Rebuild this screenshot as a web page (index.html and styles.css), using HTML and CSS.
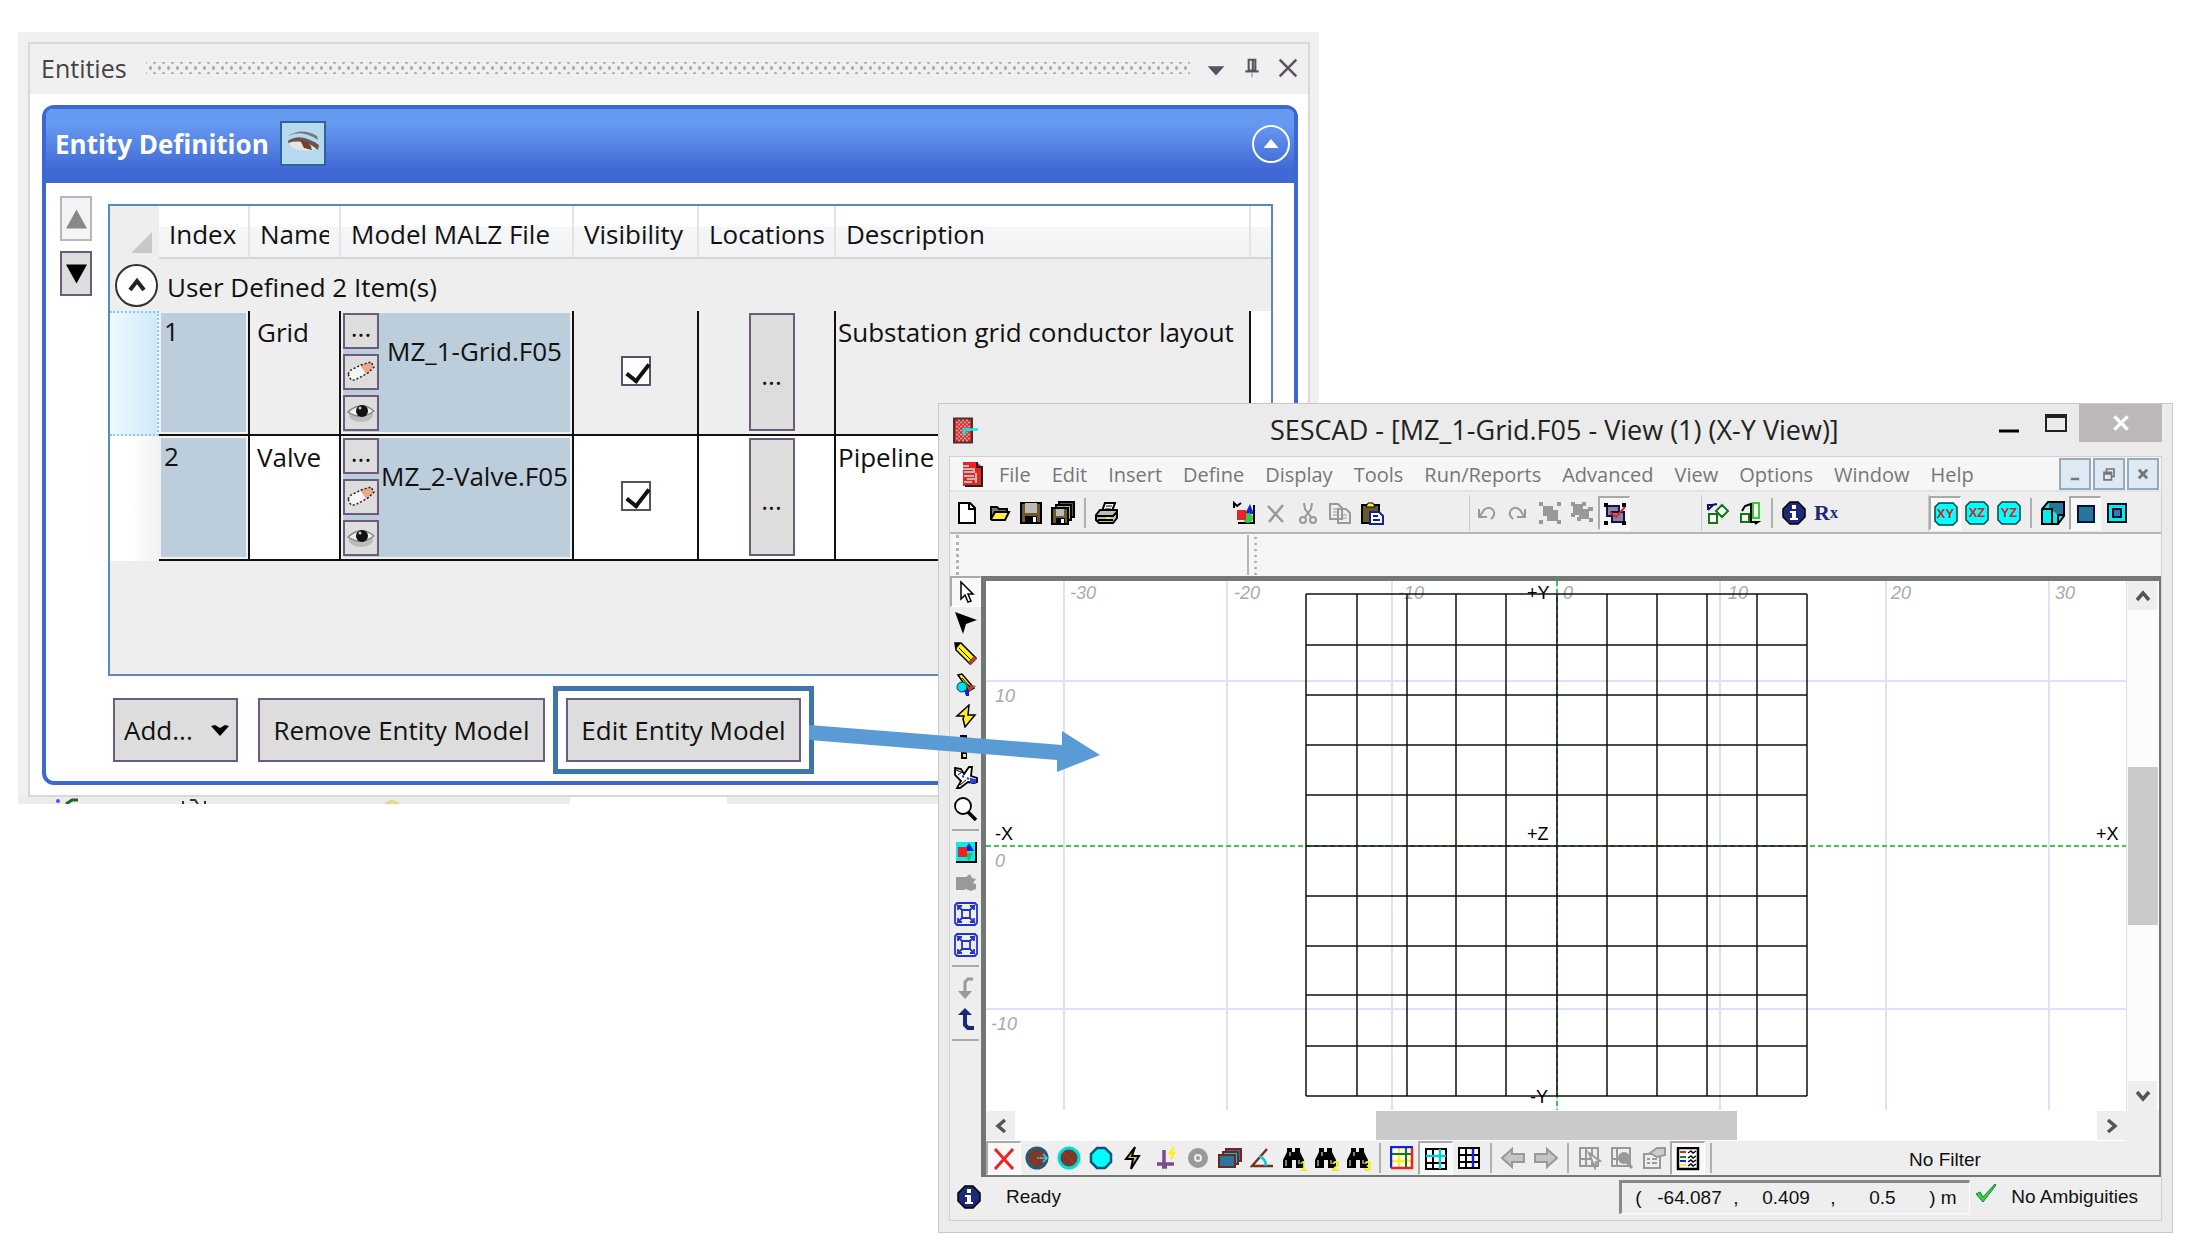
FILE: index.html
```
<!DOCTYPE html>
<html lang="en">
<head>
    <meta charset="UTF-8">
    <title>Edit Entity Model</title>
    <link rel="stylesheet" href="styles.css">
</head>
<body>

<!-- shared icons -->
<svg class="sprite">
    <symbol id="i-eraser" viewBox="0 0 28 24">
        <path d="M1 14L4 10 14 5 24 2l3 5-6 6-13 7H4z" fill="#f6f6f6"/>
        <path d="M13 5l11-3 3 5-6 6-2 1z" fill="#eda98c"/>
        <path d="M1 14L4 10 14 5 24 2l3 5-6 6-13 7H4z" fill="none" stroke="#222" stroke-width="1.5" stroke-dasharray="2 2"/>
    </symbol>
    <symbol id="i-eye" viewBox="0 0 28 24">
        <ellipse cx="14" cy="14" rx="12" ry="7" fill="#bbb"/>
        <path d="M1 11Q14 -1 27 10Q14 20 1 11z" fill="#eee" stroke="#888" stroke-width="1.5"/>
        <circle cx="15" cy="10" r="6" fill="#111"/>
        <circle cx="13" cy="7" r="1.5" fill="#ccc"/>
    </symbol>
    <symbol id="i-info" viewBox="0 0 24 24">
        <path d="M8 1h8l7 7v8l-7 7H8l-7-7V8z" fill="#1c2878" stroke="#000" stroke-width="1.5"/>
        <path d="M10 4h4v4h-4zM8 10h6v7h2v2H8v-2h2v-5H8z" fill="#fff"/>
    </symbol>
    <symbol id="i-app" viewBox="0 0 26 26">
        <path d="M1 1h18v24H1z" fill="#e22" stroke="#433" stroke-width="2"/>
        <path d="M3 5h14M3 9h14M3 13h14M3 17h14M3 21h14M6 2v22M10 2v22M14 2v22" stroke="#bbb" stroke-dasharray="2 2" stroke-width="1.5"/>
        <path d="M11 18v-6h14" fill="none" stroke="#0ee" stroke-width="2.5"/>
    </symbol>
    <symbol id="i-doc" viewBox="0 0 22 26">
        <path d="M1 1h14l5 5v19H1z" fill="#e22"/>
        <path d="M15 1v5h5v19H3" fill="none" stroke="#222" stroke-width="2"/>
        <path d="M1 5h6M1 8h11v3H2M2 15h10M2 21h8M14 12v10M5 18h8" stroke="#bbb" stroke-width="2" fill="none"/>
    </symbol>
    <symbol id="i-new" viewBox="0 0 24 24">
        <path d="M4 2h11l5 5v15H4z" fill="#fff" stroke="#000" stroke-width="2"/><path d="M14 2v6h6" fill="none" stroke="#000" stroke-width="2"/>
    </symbol>
    <symbol id="i-open" viewBox="0 0 24 24">
        <path d="M4 18V6h6l2 2h8v4" fill="#777" stroke="#000" stroke-width="2"/>
        <path d="M4 18l4-7h14l-4 8H5z" fill="#ffef3c" stroke="#000" stroke-width="2"/>
    </symbol>
    <symbol id="i-save" viewBox="0 0 24 24">
        <path d="M2 2h20v20H2z" fill="#6b5a28" stroke="#000" stroke-width="2"/>
        <path d="M6 2h12v10H6z" fill="#bbb"/><path d="M6 15h12v7H6z"/><path d="M14 16h3v5h-3z" fill="#fff"/>
    </symbol>
    <symbol id="i-saveall" viewBox="0 0 24 24">
        <path d="M8 1h15v15H8z" fill="#6b5a28" stroke="#000" stroke-width="2"/>
        <path d="M5 4h15v15H5z" fill="#aaa" stroke="#000" stroke-width="2"/>
        <path d="M1 7h16v16H1z" fill="#6b5a28" stroke="#000" stroke-width="2"/>
        <path d="M5 8h8v7H5z" fill="#bbb"/><path d="M5 17h9v6H5z"/><path d="M10 18h3v4h-3z" fill="#fff"/>
    </symbol>
    <symbol id="i-print" viewBox="0 0 24 24">
        <path d="M7 10l3-8h10l-3 8z" fill="#fff" stroke="#000" stroke-width="2"/>
        <path d="M11 5h6M10 8h6" stroke="#000"/>
        <path d="M1 14l4-5h17v8l-4 5H4l-3-3z" fill="#bbb" stroke="#000" stroke-width="2"/>
        <path d="M2 15h16l4-4M3 19h15" stroke="#000" stroke-width="2" fill="none"/><path d="M11 16h5v2h-5z" fill="#fe0"/>
    </symbol>
    <symbol id="i-image" viewBox="0 0 24 24">
        <path d="M22 4v18H6" fill="none" stroke="#000" stroke-width="2"/>
        <path d="M13 13l5-10 4 10z" fill="#12d"/><circle cx="16" cy="17" r="5" fill="#3c4"/><path d="M5 9h9v10H5z" fill="#e22"/>
        <path d="M2 7V2l3 3 4-3" fill="none" stroke="#000" stroke-width="2"/>
    </symbol>
    <symbol id="i-delete" viewBox="0 0 24 24"><path d="M4 5l15 16M19 4L5 21" stroke="#999" stroke-width="2.5"/></symbol>
    <symbol id="i-cut" viewBox="0 0 24 24">
        <path d="M8 2l1 6 6 8M16 2l-1 6-6 8" fill="none" stroke="#999" stroke-width="2"/>
        <circle cx="7" cy="19" r="3" fill="none" stroke="#999" stroke-width="2"/><circle cx="17" cy="19" r="3" fill="none" stroke="#999" stroke-width="2"/>
    </symbol>
    <symbol id="i-copy" viewBox="0 0 24 24">
        <path d="M2 3h8l4 4v11H2zM10 8h8l4 4v10H10z" fill="#eee" stroke="#999" stroke-width="2"/>
        <path d="M5 8h4M5 11h4M5 14h4M13 14h6M13 17h6" stroke="#999"/>
    </symbol>
    <symbol id="i-paste" viewBox="0 0 24 24">
        <path d="M2 4h17v18H2z" fill="#6b5a28" stroke="#000" stroke-width="2"/><path d="M6 6l2-4h5l2 4z" fill="#fe3" stroke="#000"/>
        <path d="M10 11h9l4 4v8H10z" fill="#fff" stroke="#129" stroke-width="2"/><path d="M13 15h5M13 19h7" stroke="#129" stroke-width="2"/>
    </symbol>
    <symbol id="i-undo" viewBox="0 0 24 24"><path d="M5 8v8h8M6 15l4-6q4-4 8-1t1 8l-2 2" fill="none" stroke="#999" stroke-width="2"/></symbol>
    <symbol id="i-redo" viewBox="0 0 24 24"><path d="M19 8v8h-8M18 15l-4-6q-4-4-8-1t-1 8l2 2" fill="none" stroke="#999" stroke-width="2"/></symbol>
    <symbol id="i-group" viewBox="0 0 24 24">
        <path d="M5 5h10v4h5v11H9v-5H5z" fill="#999"/><path d="M1 1h4v4H1zM19 1h4v4h-4zM1 19h4v4H1zM19 19h4v4h-4z" fill="#999"/>
    </symbol>
    <symbol id="i-ungroup" viewBox="0 0 24 24">
        <path d="M3 3h10v5h6v10H9v-4H3z" fill="#999"/><path d="M1 1h4v4H1zM12 1h4v4h-4zM1 12h4v4H1zM7 16h4v4H7zM18 6h5v4h-5zM19 17h4v4h-4z" fill="#999"/>
    </symbol>
    <symbol id="i-select" viewBox="0 0 24 24">
        <path d="M4 4h12v10H4z" fill="#889" stroke="#115" stroke-width="2"/><path d="M9 10h12v10H9z" fill="#889" stroke="#115" stroke-width="2"/>
        <path d="M7 10l6 5 9-10" stroke="#e22" stroke-width="2" fill="none"/>
        <path d="M1 1h4v4H1zM19 1h4v4h-4zM1 19h4v4H1zM19 19h4v4h-4z"/>
    </symbol>
    <symbol id="i-rotate" viewBox="0 0 24 24">
        <path d="M3 13h8v9H3zM16 4l6 6-6 6-6-6z" fill="#fff" stroke="#171" stroke-width="2"/><path d="M2 9V4h4l5-1M2 9l5-5" stroke="#116" stroke-width="2" fill="none"/>
    </symbol>
    <symbol id="i-mirror" viewBox="0 0 24 24">
        <path d="M3 13h8v8H3z" fill="#fff" stroke="#171" stroke-width="2"/><path d="M15 2h6v15h-6z" fill="#fff" stroke="#3c3" stroke-width="2"/>
        <path d="M4 10l3-5 6-2v18M12 21h8l-3 2" stroke="#000" stroke-width="2" fill="none"/>
    </symbol>
    <symbol id="i-plane" viewBox="0 0 24 24"><path d="M5 1h14l4 4v14l-4 4H5l-4-4V5z" fill="#0ff" stroke="#044" stroke-width="1.5"/></symbol>
    <symbol id="i-cube" viewBox="0 0 24 24">
        <path d="M7 1h16v14l-6 8H1V8z" fill="#0ee" stroke="#000" stroke-width="2"/><path d="M8 2h14v12h-5l-6-5H8z" fill="#27779a"/>
        <path d="M1 8h10v15M17 22v-8h6" fill="none" stroke="#000" stroke-width="2"/>
    </symbol>
    <symbol id="i-face" viewBox="0 0 24 24"><path d="M4 4h16v16H4z" fill="#27779a" stroke="#014" stroke-width="2"/></symbol>
    <symbol id="i-nested" viewBox="0 0 24 24">
        <path d="M3 3h18v18H3z" fill="#0ee" stroke="#012" stroke-width="2"/><path d="M8 8h8v8H8z" fill="#37c" stroke="#012" stroke-width="2"/>
    </symbol>
    <symbol id="i-pointer" viewBox="0 0 24 24"><path d="M7 2v17l4-4 3 7 3-1-3-7h5z" fill="#fff" stroke="#000" stroke-width="1.5"/></symbol>
    <symbol id="i-arrow" viewBox="0 0 24 24"><path d="M1 1l22 8-11 4-3 10z"/></symbol>
    <symbol id="i-pencil" viewBox="0 0 24 24">
        <path d="M1 1h6l15 15-6 6L2 8z" fill="#fe2" stroke="#000" stroke-width="1.5"/><path d="M1 1h6L2 7z"/><path d="M5 6l13 13" stroke="#000"/><path d="M20 14l3 3-6 6-3-3z" fill="#a43"/>
    </symbol>
    <symbol id="i-objects" viewBox="0 0 24 24">
        <path d="M4 2l4-1 12 14-5 3z" fill="#fe2" stroke="#000" stroke-width="1.5"/><circle cx="8" cy="14" r="5" fill="#0de" stroke="#044"/><path d="M12 11l10 2-7 6z" fill="#a43"/><path d="M8 5l8 9" stroke="#000"/><path d="M10 17h5v6h-3z" fill="#12c"/>
    </symbol>
    <symbol id="i-bolt" viewBox="0 0 24 24"><path d="M15 1L3 12h7l-1 3 2 8 10-12h-7z" fill="#fe2" stroke="#000" stroke-width="1.5"/></symbol>
    <symbol id="i-ruler" viewBox="0 0 24 24"><path d="M6 0h7v24H7V4H6z"/><path d="M9 8h3v3H9zM9 14h3v3H9zM9 19h3v3H9z" fill="#fe2"/></symbol>
    <symbol id="i-plane2" viewBox="0 0 24 24">
        <path d="M1 2l6 1 3 5 5-7h3l-1 9 6 2v4l-3 1-6-1-8 6H3l4-7-6-6z" fill="#fff" stroke="#000" stroke-width="1.8"/><path d="M2 4l5 2M4 9l4-3M6 19l6-5" stroke="#000"/><path d="M8 10l2 1M13 12l2 1M17 13l4 1v2h-4z" fill="#24d" stroke="#24d" stroke-width="2"/>
    </symbol>
    <symbol id="i-zoom" viewBox="0 0 24 24"><circle cx="9" cy="9" r="8" fill="#fff" stroke="#000" stroke-width="1.8"/><path d="M14 15l8 8" stroke="#000" stroke-width="3.5"/></symbol>
    <symbol id="i-shapes" viewBox="0 0 24 24">
        <path d="M2 2h20v20H2z" fill="#0ee"/><path d="M22 2v20H2" fill="none" stroke="#000" stroke-width="2"/><path d="M10 11l5-8 5 8z" fill="#12d"/><path d="M10 13h9l-4 8z" fill="#3b5"/><path d="M4 7h9v10H4z" fill="#e22"/>
    </symbol>
    <symbol id="i-shapes-off" viewBox="0 0 24 24"><path d="M2 6h10l4-3 2 4 4 1-3 4 3 1v5l-5 2-5-2-2 1H2z" fill="#999"/></symbol>
    <symbol id="i-fit" viewBox="0 0 24 24">
        <path d="M3 1h18l2 2v18l-2 2H3l-2-2V3zM8 8h8v8H8zM3 3l5 5M21 3l-5 5M3 21l5-5M21 21l-5-5M4 8V4h4M20 8V4h-4M4 16v4h4M20 16v4h-4" fill="none" stroke="#23c" stroke-width="1.8"/>
    </symbol>
    <symbol id="i-down" viewBox="0 0 24 24"><path d="M19 3h-5l-3 3v10" fill="none" stroke="#999" stroke-width="3"/><path d="M4 15h14l-7 8z" fill="#999"/></symbol>
    <symbol id="i-up" viewBox="0 0 24 24"><path d="M11 7v11l3 3h6" fill="none" stroke="#1c2878" stroke-width="4"/><path d="M4 8h14l-7-7z" fill="#1c2878"/></symbol>
    <symbol id="i-redx" viewBox="0 0 24 24"><path d="M3 2l18 20M21 2L3 22" stroke="#e22" stroke-width="3"/></symbol>
    <symbol id="i-ball1" viewBox="0 0 24 24"><circle cx="12" cy="12" r="10" fill="#7a3a2a" stroke="#255a78" stroke-width="3"/><path d="M12 12h9M18 8l4 4-4 4" fill="none" stroke="#4cd" stroke-width="1.5"/><path d="M8 18l9-9" stroke="#d22"/></symbol>
    <symbol id="i-ball2" viewBox="0 0 24 24"><circle cx="12" cy="12" r="10" fill="#7a3a2a" stroke="#0dd" stroke-width="3"/><path d="M6 6l12 12" stroke="#d22"/></symbol>
    <symbol id="i-ball3" viewBox="0 0 24 24"><path d="M8 2h8l6 6v8l-6 6H8l-6-6V8z" fill="#0ff" stroke="#157" stroke-width="2.5"/></symbol>
    <symbol id="i-bolt2" viewBox="0 0 24 24"><path d="M14 1L5 13h7l-2 10 8-13h-7z" fill="#dc2" stroke="#000" stroke-width="2"/></symbol>
    <symbol id="i-ground" viewBox="0 0 24 24"><path d="M10 4v15M3 18h17M8 21h5" stroke="#7b4b8c" stroke-width="3.5"/><path d="M20 1l-4 6h4l-3 6" stroke="#fe2" stroke-width="2.5" fill="none"/></symbol>
    <symbol id="i-gear" viewBox="0 0 24 24"><circle cx="12" cy="12" r="7" fill="none" stroke="#999" stroke-width="6"/><circle cx="12" cy="12" r="2" fill="#999"/></symbol>
    <symbol id="i-layers" viewBox="0 0 24 24">
        <path d="M8 3h15v12H8z" fill="#27779a" stroke="#722" stroke-width="2"/><path d="M5 6h15v12H5z" fill="#0cc" stroke="#722" stroke-width="2"/><path d="M1 9h16v12H1z" fill="#27779a" stroke="#722" stroke-width="2"/>
    </symbol>
    <symbol id="i-angle" viewBox="0 0 24 24"><path d="M17 3L2 20h21" fill="none" stroke="#7a3020" stroke-width="2.5"/><path d="M9 10q7 3 7 10" fill="none" stroke="#0cd" stroke-width="2.5"/></symbol>
    <symbol id="i-find" viewBox="0 0 24 24"><path d="M5 2h5v4h3V2h5v4l4 8v8h-8v-8h-4v8H1v-8l4-8z"/><path d="M4 14v6M17 14v4M8 6v4" stroke="#fff"/></symbol>
    <symbol id="i-grid1" viewBox="0 0 24 24">
        <path d="M2 2h20v20H2z" fill="#fff"/><path d="M9 2v20M16 2v20M2 15h20" stroke="#fe2" stroke-width="2.5"/><path d="M2 8h20M16 2v20" stroke="#172" stroke-width="2"/>
        <path d="M1 22V1h22" fill="none" stroke="#12d" stroke-width="2.5"/><path d="M1 22h21V2" fill="none" stroke="#e22" stroke-width="2.5"/>
    </symbol>
    <symbol id="i-grid2" viewBox="0 0 24 24">
        <path d="M2 2h20v20H2z" fill="#fff" stroke="#000" stroke-width="2"/><path d="M9 2v20M2 16h20" stroke="#000" stroke-width="2"/><path d="M16 2v20M2 9h20" stroke="#0cd" stroke-width="2.5"/>
    </symbol>
    <symbol id="i-grid3" viewBox="0 0 24 24">
        <path d="M2 2h20v20H2zM9 2v20M2 9h20M2 16h20" fill="#fff" stroke="#000" stroke-width="2"/><path d="M16 3v18" stroke="#12d" stroke-width="2.5"/>
    </symbol>
    <symbol id="i-back" viewBox="0 0 24 24"><path d="M1 12L11 3v5h12v8H11v5z" fill="#c4c4c4" stroke="#999" stroke-width="2"/></symbol>
    <symbol id="i-next" viewBox="0 0 24 24"><path d="M23 12L13 3v5H1v8h12v5z" fill="#c4c4c4" stroke="#999" stroke-width="2"/></symbol>
    <symbol id="i-pick" viewBox="0 0 24 24"><path d="M2 2h18v18H2zM8 2v18M14 2v18M2 13h12" fill="none" stroke="#999" stroke-width="2"/><path d="M11 7l11 8-4 1-1 6z" fill="#eee" stroke="#999" stroke-width="2"/></symbol>
    <symbol id="i-look" viewBox="0 0 24 24"><path d="M2 2h18v18H2zM7 2v18M2 13h9" fill="none" stroke="#999" stroke-width="2"/><circle cx="14" cy="12" r="6" fill="#999"/><path d="M16 15l6 7" stroke="#999" stroke-width="3"/></symbol>
    <symbol id="i-props" viewBox="0 0 24 24"><path d="M2 8h16v14H2zM5 13h3M10 13h5M5 17h3M10 17h5" fill="none" stroke="#999" stroke-width="2"/><path d="M8 7l7-5h8v7l-8 2z" fill="#ccc" stroke="#999" stroke-width="2"/></symbol>
    <symbol id="i-legend" viewBox="0 0 24 24">
        <path d="M2 1h20v21H2z" fill="#fff" stroke="#000" stroke-width="2.5"/><path d="M12 6l3-2 2 2 3-2M12 11l3-2 2 2 3-2M12 15l3-2 2 2 3-2M12 19l3-2 2 2 3-2" fill="none" stroke="#000" stroke-width="1.5"/>
        <path d="M4 5h6" stroke="#e22" stroke-width="2"/><path d="M4 10h6" stroke="#183" stroke-width="2"/><path d="M4 14h6" stroke="#12d" stroke-width="2"/><path d="M4 18h6" stroke="#fe2" stroke-width="2"/>
    </symbol>
    <symbol id="i-chevron" viewBox="0 0 24 24"><path d="M6 16l6-7 6 7" fill="none" stroke="#555" stroke-width="3.5"/></symbol>
</svg>

<div class="stage">

<section class="dock">
    <div class="dock-inner">
        <header class="dock-title">
            <span>Entities</span>
            <i class="grip"></i>
            <button aria-label="Menu"><svg viewBox="0 0 24 24"><path d="M2 10h20L12 21z" fill="#5a5260"/></svg></button>
            <button aria-label="Pin"><svg viewBox="0 0 24 24"><path d="M8 2h8v13H8zM4 16h16M13 2v13" fill="none" stroke="#5a5260" stroke-width="2.5"/><path d="M12 17v6" stroke="#aaa" stroke-width="2"/></svg></button>
            <button aria-label="Close"><svg viewBox="0 0 24 24"><path d="M2 2l20 20M22 2L2 22" stroke="#5a5260" stroke-width="3"/></svg></button>
        </header>

        <div class="group">
            <div class="group-head">
                <h2>Entity Definition</h2>
                <button class="toggle-eye" aria-label="Show or hide"><svg viewBox="0 0 34 28"><path d="M2 6Q16-1 32 10L31 6Q16-3 2 6z" fill="#777"/><path d="M2 11Q14 3 33 17Q20 24 6 18z" fill="#e8e4e2"/><path d="M2 11Q14 2 33 15L32 20Q18 8 2 13z" fill="#6c5550"/><path d="M14 10q10 0 12 10l-8-2z" fill="#70402c"/></svg></button>
                <button class="collapse" aria-label="Collapse"><svg viewBox="0 0 20 12"><path d="M0 12L10 0l10 12z" fill="#fff"/></svg></button>
            </div>

            <div class="group-body">
                <div class="order">
                    <button disabled aria-label="Move up"><svg viewBox="0 0 22 20"><path d="M0 20L11 0l11 20z" fill="#888"/></svg></button>
                    <button aria-label="Move down"><svg viewBox="0 0 22 20"><path d="M0 0h22L11 20z"/></svg></button>
                </div>

                <div class="content">
                    <div class="table-frame">
                        <table>
                            <colgroup><col class="c-head"><col class="c-index"><col class="c-name"><col class="c-file"><col class="c-vis"><col class="c-loc"><col><col class="c-end"></colgroup>
                            <thead>
                                <tr><th class="corner"><svg viewBox="0 0 22 22"><path d="M22 0v22H0z" fill="#c8c8c8"/></svg></th><th>Index</th><th><div>Name</div></th><th>Model MALZ File</th><th>Visibility</th><th>Locations</th><th>Description</th><th></th></tr>
                            </thead>
                            <tbody>
                                <tr class="group-row">
                                    <td colspan="8"><div><button aria-label="Collapse group"><svg viewBox="0 0 24 24"><path d="M5 17l7-9 7 9" fill="none" stroke="#222" stroke-width="4"/></svg></button><span>User Defined 2 Item(s)</span></div></td>
                                </tr>
                                <tr class="selected">
                                    <td class="row-head"></td>
                                    <td class="locked">1</td>
                                    <td>Grid</td>
                                    <td class="locked"><div class="file"><div class="file-tools"><button>...</button><button aria-label="Clear"><svg><use href="#i-eraser"/></svg></button><button aria-label="View"><svg><use href="#i-eye"/></svg></button></div><span>MZ_1-Grid.F05</span></div></td>
                                    <td class="vis"><input type="checkbox" aria-label="Grid visible" checked></td>
                                    <td class="loc"><button>...</button></td>
                                    <td class="desc">Substation grid conductor layout</td>
                                    <td class="end"></td>
                                </tr>
                                <tr>
                                    <td class="row-head"></td>
                                    <td class="locked">2</td>
                                    <td>Valve</td>
                                    <td class="locked"><div class="file"><div class="file-tools"><button>...</button><button aria-label="Clear"><svg><use href="#i-eraser"/></svg></button><button aria-label="View"><svg><use href="#i-eye"/></svg></button></div><span>MZ_2-Valve.F05</span></div></td>
                                    <td class="vis"><input type="checkbox" aria-label="Valve visible" checked></td>
                                    <td class="loc"><button>...</button></td>
                                    <td class="desc">Pipeline</td>
                                    <td class="end"></td>
                                </tr>
                            </tbody>
                        </table>
                    </div>

                    <div class="actions">
                        <button class="add">Add...<svg viewBox="0 0 18 12"><path d="M0 2l4-1 5 3 5-3 4 1-9 10z"/></svg></button>
                        <button>Remove Entity Model</button>
                        <div class="highlight"><button>Edit Entity Model</button></div>
                    </div>
                </div>
            </div>
        </div>
    </div>
    <!-- tops of the toolbar icons under the panel -->
    <div class="dock-foot">
        <i><svg viewBox="0 0 400 7"><circle cx="40" cy="4" r="2" fill="#45f"/><path d="M48 7l6-4h6" fill="none" stroke="#262" stroke-width="3"/><path d="M165 7v-3M172 3h5l3 4M187 7v-3" fill="none" stroke="#333" stroke-width="2"/><path d="M366 7q8-8 16 0z" fill="#dd8"/></svg></i>
        <i></i>
    </div>
</section>

<section class="cad">
    <header class="cad-title">
        <svg class="app-icon"><use href="#i-app"/></svg>
        <h1>SESCAD - [MZ_1-Grid.F05 - View (1) (X-Y View)]</h1>
        <div class="win-buttons">
            <button aria-label="Minimize"><svg viewBox="0 0 24 24"><path d="M2 20h20" stroke="#000" stroke-width="3"/></svg></button>
            <button aria-label="Maximize"><svg viewBox="0 0 24 24"><path d="M2 4h20v16H2z" fill="none" stroke="#222" stroke-width="2"/><path d="M1 5h22" stroke="#222" stroke-width="4"/></svg></button>
            <button class="close" aria-label="Close"><svg viewBox="0 0 24 24"><path d="M4 4l16 16M20 4L4 20" stroke="#fff" stroke-width="4"/></svg></button>
        </div>
    </header>

    <div class="client">
        <nav class="menu">
            <svg class="doc-icon"><use href="#i-doc"/></svg>
            <a href="#">File</a><a href="#">Edit</a><a href="#">Insert</a><a href="#">Define</a><a href="#">Display</a><a href="#">Tools</a><a href="#">Run/Reports</a><a href="#">Advanced</a><a href="#">View</a><a href="#">Options</a><a href="#">Window</a><a href="#">Help</a>
            <div class="mdi">
                <button aria-label="Minimize view"><svg viewBox="0 0 24 24"><path d="M7 18h10" stroke="#777" stroke-width="3"/></svg></button>
                <button aria-label="Restore view"><svg viewBox="0 0 24 24"><path d="M6 10h9v9H6zM9 9V6h9v9h-3M6 12h9" fill="none" stroke="#777" stroke-width="2"/></svg></button>
                <button aria-label="Close view"><svg viewBox="0 0 24 24"><path d="M7 7l10 10M17 7L7 17" stroke="#777" stroke-width="3.5"/></svg></button>
            </div>
        </nav>

        <div class="toolbar">
            <div class="tools">
                <button aria-label="New"><svg><use href="#i-new"/></svg></button><button aria-label="Open"><svg><use href="#i-open"/></svg></button><button aria-label="Save"><svg><use href="#i-save"/></svg></button><button aria-label="Save all"><svg><use href="#i-saveall"/></svg></button><i></i><button aria-label="Print"><svg><use href="#i-print"/></svg></button>
            </div>
            <div class="tools">
                <button aria-label="Insert object"><svg><use href="#i-image"/></svg></button><button aria-label="Delete"><svg><use href="#i-delete"/></svg></button><button aria-label="Cut"><svg><use href="#i-cut"/></svg></button><button aria-label="Copy"><svg><use href="#i-copy"/></svg></button><button aria-label="Paste"><svg><use href="#i-paste"/></svg></button>
            </div>
            <div class="tools handle">
                <button aria-label="Undo"><svg><use href="#i-undo"/></svg></button><button aria-label="Redo"><svg><use href="#i-redo"/></svg></button><button aria-label="Group"><svg><use href="#i-group"/></svg></button><button aria-label="Ungroup"><svg><use href="#i-ungroup"/></svg></button><button class="on" aria-label="Select"><svg><use href="#i-select"/></svg></button>
            </div>
            <div class="tools handle">
                <button aria-label="Rotate"><svg><use href="#i-rotate"/></svg></button><button aria-label="Mirror"><svg><use href="#i-mirror"/></svg></button><i></i><button aria-label="Information"><svg><use href="#i-info"/></svg></button><button class="rx" aria-label="Rx">R<small>x</small></button>
            </div>
            <div class="tools handle">
                <button class="on plane"><svg><use href="#i-plane"/></svg><span>XY</span></button><button class="plane"><svg><use href="#i-plane"/></svg><span>XZ</span></button><button class="plane"><svg><use href="#i-plane"/></svg><span>YZ</span></button><i></i><button aria-label="3D"><svg><use href="#i-cube"/></svg></button><button class="on" aria-label="Face"><svg><use href="#i-face"/></svg></button><button aria-label="Nested"><svg><use href="#i-nested"/></svg></button>
            </div>
        </div>

        <div class="blank-bars"><i></i><i></i></div>

        <div class="work">
            <div class="side-tools">
                <button class="on" aria-label="Pointer"><svg><use href="#i-pointer"/></svg></button>
                <button aria-label="Arrow"><svg><use href="#i-arrow"/></svg></button>
                <button aria-label="Pencil"><svg><use href="#i-pencil"/></svg></button>
                <button aria-label="Objects"><svg><use href="#i-objects"/></svg></button>
                <button aria-label="Energize"><svg><use href="#i-bolt"/></svg></button>
                <button aria-label="Measure"><svg><use href="#i-ruler"/></svg></button>
                <button aria-label="Fly"><svg><use href="#i-plane2"/></svg></button>
                <button aria-label="Zoom"><svg><use href="#i-zoom"/></svg></button>
                <i></i>
                <button aria-label="Shapes"><svg><use href="#i-shapes"/></svg></button>
                <button aria-label="Shapes off"><svg><use href="#i-shapes-off"/></svg></button>
                <button aria-label="Fit"><svg><use href="#i-fit"/></svg></button>
                <button aria-label="Fit all"><svg><use href="#i-fit"/></svg></button>
                <i></i>
                <button aria-label="Down"><svg><use href="#i-down"/></svg></button>
                <button aria-label="Up"><svg><use href="#i-up"/></svg></button>
                <i></i>
            </div>

            <div class="view">
                <div class="canvas-row">
                    <svg class="canvas" viewBox="0 0 1140 529">
                        <path class="guide" d="M78 0v529M241 0v529M406 0v529M571 0v529M734 0v529M900 0v529M1063 0v529M0 100h1140M0 428h1140"/>
                        <g class="scale">
                            <text x="84" y="18">-30</text><text x="248" y="18">-20</text><text x="412" y="18">-10</text><text x="577" y="18">0</text><text x="742" y="18">10</text><text x="905" y="18">20</text><text x="1069" y="18">30</text>
                            <text x="9" y="121">10</text><text x="9" y="286">0</text><text x="5" y="449">-10</text>
                        </g>
                        <path class="axis" d="M0 265h1140M571 0v529"/>
                        <path class="mesh" d="M320 13h501M320 64h501M320 114h501M320 164h501M320 214h501M320 265h501M320 315h501M320 365h501M320 414h501M320 465h501M320 515h501M320 13v502M371 13v502M421 13v502M470 13v502M520 13v502M571 13v502M621 13v502M671 13v502M721 13v502M771 13v502M821 13v502"/>
                        <g class="axis-name">
                            <text x="9" y="259">-X</text><text x="1110" y="259">+X</text><text x="541" y="18">+Y</text><text x="544" y="522">-Y</text><text x="541" y="259">+Z</text>
                        </g>
                    </svg>
                    <div class="vscroll">
                        <button aria-label="Scroll up"><svg><use href="#i-chevron"/></svg></button>
                        <div class="thumb"></div>
                        <button aria-label="Scroll down"><svg class="down"><use href="#i-chevron"/></svg></button>
                    </div>
                </div>
                <div class="hscroll">
                    <button aria-label="Scroll left"><svg class="left"><use href="#i-chevron"/></svg></button>
                    <div class="thumb"></div>
                    <button aria-label="Scroll right"><svg class="right"><use href="#i-chevron"/></svg></button>
                </div>
                <div class="filter-bar">
                    <div class="tools">
                        <button class="on" aria-label="Clear filter"><svg><use href="#i-redx"/></svg></button><button aria-label="Filter 1"><svg><use href="#i-ball1"/></svg></button><button aria-label="Filter 2"><svg><use href="#i-ball2"/></svg></button><button aria-label="Filter 3"><svg><use href="#i-ball3"/></svg></button><button aria-label="Energization"><svg><use href="#i-bolt2"/></svg></button><button aria-label="Ground"><svg><use href="#i-ground"/></svg></button><button aria-label="Coating"><svg><use href="#i-gear"/></svg></button><button aria-label="Layers"><svg><use href="#i-layers"/></svg></button><button aria-label="Angle"><svg><use href="#i-angle"/></svg></button><button class="find"><svg><use href="#i-find"/></svg><span>1</span></button><button class="find"><svg><use href="#i-find"/></svg><span>2</span></button><button class="find"><svg><use href="#i-find"/></svg><span>3</span></button><i></i><button aria-label="Grid 1"><svg><use href="#i-grid1"/></svg></button><button class="on" aria-label="Grid 2"><svg><use href="#i-grid2"/></svg></button><button aria-label="Grid 3"><svg><use href="#i-grid3"/></svg></button><i></i><button aria-label="Back"><svg><use href="#i-back"/></svg></button><button aria-label="Next"><svg><use href="#i-next"/></svg></button><i></i><button aria-label="Pick"><svg><use href="#i-pick"/></svg></button><button aria-label="Look"><svg><use href="#i-look"/></svg></button><button aria-label="Properties"><svg><use href="#i-props"/></svg></button><button class="on" aria-label="Legend"><svg><use href="#i-legend"/></svg></button><i></i>
                    </div>
                    <span class="filter-name">No Filter</span>
                </div>
            </div>
        </div>

        <footer class="status">
            <svg><use href="#i-info"/></svg>
            <span class="ready">Ready</span>
            <div class="coords"><span>(</span><span>-64.087</span><span>,</span><span>0.409</span><span>,</span><span>0.5</span><span>) m</span></div>
            <svg class="ok" viewBox="0 0 22 20"><path d="M1 11l4-2 3 5L20 1l1 1L8 19z" fill="#3ecb48" stroke="#183" /></svg>
            <span>No Ambiguities</span>
        </footer>
    </div>
</section>

<svg class="pointer-arrow" viewBox="0 0 292 42"><path d="M0 -6L253 14V0L291 24L248 41V29L0 9z" fill="#5b9bd5"/></svg>

</div>

</body>
</html>
```
FILE: styles.css
```
* {
    box-sizing: border-box;
}
body {
    margin: 0;
    background: #fff;
    font-family: "Open Sans", "Noto Sans", sans-serif;
    font-size: 26px;
    line-height: 36px;
    color: #111;
}
button {
    font: inherit;
    color: inherit;
    padding: 0;
    border: 0;
    background: none;
}
svg {
    display: block;
    width: 24px;
    height: 24px;
    flex: none;
}
.sprite {
    position: absolute;
    width: 0;
    height: 0;
}
.stage {
    position: relative;
    padding: 32px 0 16px 18px;
    min-height: 1247px;
}

/* entities panel */
.dock {
    width: 60%;
    background: #f0f0f0;
    padding: 10px 9px 0 10px;
}
.dock-inner {
    border: 2px solid #d8d8d8;
    background: #fff;
    padding-bottom: 10px;
}
.dock-title {
    display: flex;
    align-items: center;
    gap: 16px;
    height: 50px;
    padding: 0 10px 2px 11px;
    background: #f0f0f0;
    color: #444;
    font-size: 25px;
}
.dock-title .grip {
    flex: 1;
    height: 12px;
    margin: 0 0 0 3px;
    background:
        radial-gradient(#aaa 1px, transparent 2px) 0 0 / 9px 12px,
        radial-gradient(#aaa 1px, transparent 2px) 4px 6px / 9px 12px;
}
.dock-title svg {
    width: 20px;
    height: 20px;
}
.group {
    margin: 11px 10px 0 12px;
    border: 4px solid #3d68d2;
    border-radius: 12px;
}
.group-head {
    display: flex;
    align-items: center;
    height: 74px;
    padding: 0 4px 2px 9px;
    background: linear-gradient(#659af0, #6699f0 22%, #4169d5 85%);
    border-bottom: 3px solid #3d68d2;
    border-radius: 6px 6px 0 0;
}
.group-head h2 {
    margin: 0;
    font-size: 26px;
    color: #fff;
}
.toggle-eye {
    display: flex;
    align-items: center;
    justify-content: center;
    width: 46px;
    height: 45px;
    margin-left: 11px;
    border: 2px solid #2c6792;
    background: #b5d9ee;
}
.toggle-eye svg {
    width: 34px;
    height: 28px;
}
.collapse {
    display: flex;
    align-items: center;
    justify-content: center;
    width: 38px;
    height: 38px;
    margin-left: auto;
    border: 2px solid #fff;
    border-radius: 50%;
}
.collapse svg {
    width: 18px;
    height: 9px;
}
.group-body {
    display: flex;
    gap: 16px;
    padding: 13px 21px 7px 14px;
}
.order {
    display: flex;
    flex-direction: column;
    gap: 10px;
    width: 32px;
}
.order button {
    display: flex;
    align-items: center;
    justify-content: center;
    height: 45px;
    border: 2px solid #6c5b7b;
    background: #ddd;
}
.order button:disabled {
    border-color: #bbb4c0;
    background: #f4f4f4;
}
.order svg {
    width: 21px;
    height: 20px;
}
.content {
    flex: 1;
    min-width: 0;
}
.table-frame {
    margin-top: 8px;
    padding-bottom: 113px;
    border: 2px solid #5b88b4;
    background: #eee;
}
table {
    width: 100%;
    table-layout: fixed;
    border-collapse: separate;
    border-spacing: 0;
}
.c-head { width: 49px; }
.c-index { width: 91px; }
.c-name { width: 91px; }
.c-file { width: 233px; }
.c-vis { width: 125px; }
.c-loc { width: 137px; }
.c-end { width: 20px; }
th {
    height: 53px;
    padding: 4px 0 0 10px;
    overflow: hidden;
    font-weight: normal;
    text-align: left;
    white-space: nowrap;
    border-right: 2px solid #e2e4e6;
    border-bottom: 2px solid #d5d5d5;
    background: linear-gradient(#fff 40%, #f5f6f7 41%, #f1f3f5);
}
th div {
    overflow: hidden;
    width: 69px;
}
th:last-child {
    border-right: 0;
}
.corner {
    border: 0;
    background: #eee;
    vertical-align: bottom;
}
.corner svg {
    width: 21px;
    height: 21px;
    margin: 0 7px 6px auto;
}
td {
    height: 125px;
    padding: 3px 0 0 7px;
    vertical-align: top;
    border-right: 2px solid #111;
    border-bottom: 2px solid #111;
    background: #fff;
    white-space: nowrap;
}
.selected td {
    background: #eee;
}
.group-row td {
    height: 52px;
    padding: 0 0 0 5px;
    border: 0;
    background: #eee;
}
.group-row div {
    display: flex;
    align-items: center;
    gap: 9px;
    height: 52px;
}
.group-row span {
    padding-top: 4px;
}
.group-row button {
    display: flex;
    align-items: center;
    justify-content: center;
    width: 43px;
    height: 43px;
    border: 2px solid #333;
    border-radius: 50%;
    background: #fff;
}
td.row-head {
    border: 0;
    background: linear-gradient(90deg, #fff 40%, #f1f2f3);
}
.selected td.row-head {
    border: 2px dotted #8cc8ee;
    border-left: 0;
    background: linear-gradient(90deg, #eef9fd, #cfeafa);
}
td.locked,
.selected td.locked {
    padding: 2px;
    box-shadow: inset 0 0 0 2px #f0f0f0;
    background: #bccddc;
}
td.locked {
    text-indent: 3px;
}
.file {
    display: flex;
}
.file-tools {
    display: flex;
    flex-direction: column;
    gap: 5px;
    width: 36px;
}
.file-tools button {
    display: flex;
    align-items: center;
    justify-content: center;
    height: 36px;
    line-height: 20px;
    text-indent: 0;
    border: 2px solid #6c5b7b;
    background: #ddd;
}
.file-tools button:first-child {
    padding-bottom: 8px;
}
.file-tools svg {
    width: 28px;
}
.file span {
    flex: 1;
    padding-top: 20px;
    text-align: center;
    text-indent: 0;
}
td.vis {
    padding: 45px 0 0;
    text-align: center;
}
.vis input {
    appearance: none;
    position: relative;
    width: 30px;
    height: 30px;
    margin: 0;
    border: 2px solid #5b4f66;
    background: #fff;
}
.vis input:checked::after {
    content: "";
    position: absolute;
    left: 8px;
    top: 1px;
    width: 10px;
    height: 19px;
    border: solid #111;
    border-width: 0 4px 4px 0;
    transform: rotate(38deg);
}
td.loc {
    padding: 2px 0 0 10px;
    text-align: center;
}
.loc button {
    width: 46px;
    height: 118px;
    padding-top: 6px;
    border: 2px solid #6c5b7b;
    background: #ddd;
}
td.desc {
    padding-left: 2px;
}
td.end,
.selected td.end {
    border: 0;
    background: #fff;
}
.actions {
    display: flex;
    align-items: center;
    margin: 10px 0 0 5px;
}
.actions button {
    height: 64px;
    padding: 0;
    border: 2px solid #6c5b7b;
    background: #ddd;
    white-space: nowrap;
}
.actions > button {
    margin-right: 20px;
}
.actions > button + button {
    width: 287px;
    margin-right: 8px;
}
.actions .add {
    display: flex;
    align-items: center;
    justify-content: space-between;
    width: 125px;
    padding: 0 7px 0 9px;
}
.add svg {
    width: 18px;
    height: 12px;
}
.highlight {
    padding: 7px 8px;
    border: 5px solid #3f75ad;
}
.highlight button {
    width: 235px;
}
.dock-foot {
    display: flex;
    justify-content: space-between;
    height: 7px;
    margin: 0 -9px 0 -10px;
    background: #fff;
}
.dock-foot i {
    width: 552px;
    background: #ececec;
}
.dock-foot i + i {
    width: 592px;
}
.dock-foot svg {
    width: 400px;
    height: 7px;
}

/* cad window */
.cad {
    position: absolute;
    left: 938px;
    right: 14px;
    top: 403px;
    padding: 0 10px 11px;
    border: 1px solid #c8c8c8;
    background: #eaebea;
}
.cad-title {
    display: flex;
    align-items: center;
    height: 52px;
    padding-left: 4px;
}
.app-icon {
    width: 26px;
    height: 27px;
}
.cad-title h1 {
    flex: 1;
    margin: 0 0 0 291px;
    font-size: 27px;
    font-weight: normal;
    color: #222;
    white-space: nowrap;
}
.win-buttons {
    display: flex;
    align-self: flex-start;
}
.win-buttons button {
    display: flex;
    align-items: center;
    justify-content: center;
    width: 47px;
    height: 38px;
}
.win-buttons .close {
    width: 83px;
}
.win-buttons .close {
    background: #bcb8bb;
}
.win-buttons .close svg {
    width: 20px;
}
.client {
    border: 1px solid #d0d0d0;
    background: #eee;
}
.menu {
    display: flex;
    align-items: center;
    gap: 21px;
    height: 35px;
    padding-left: 12px;
    background: #f6f6f6;
    font-size: 20px;
    border-bottom: 2px solid #e4e4e4;
}
.menu a {
    padding-top: 2px;
    color: #777;
    text-decoration: none;
}
.doc-icon {
    width: 22px;
    height: 26px;
    margin-right: -6px;
}
.mdi {
    display: flex;
    gap: 2px;
    margin-left: auto;
    padding-right: 2px;
}
.mdi button {
    display: flex;
    align-items: center;
    justify-content: center;
    width: 32px;
    height: 32px;
    border: 2px solid #97aabc;
    background: #dde9f3;
}
.mdi svg {
    width: 20px;
    height: 20px;
}
.toolbar {
    display: grid;
    grid-template-columns: 277px 241px 232px 227px 1fr;
    height: 42px;
    padding: 3px 0 1px 1px;
    border-bottom: 2px solid #b4b7ba;
}
.tools {
    display: flex;
    align-items: center;
}
.tools.handle {
    border-left: 1px solid #c8c8c8;
}
.tools button,
.side-tools button {
    display: flex;
    align-items: center;
    justify-content: center;
    width: 32px;
    height: 34px;
}
.tools i {
    width: 2px;
    height: 30px;
    margin: 0 5px;
    background: #b0b0b0;
}
.tools .on,
.side-tools .on {
    border: 1px solid #fff;
    border-left: 2px solid #aaa;
    border-top: 2px solid #aaa;
    background: #f8f8f8;
}
.plane,
.find {
    position: relative;
}
.plane span {
    position: absolute;
    left: 0;
    right: 0;
    font: bold 13px/24px "Liberation Sans", sans-serif;
    text-align: center;
    color: #d22;
}
.find span {
    position: absolute;
    right: 2px;
    bottom: 0;
    font: bold 15px/18px "Liberation Sans", sans-serif;
    color: #f2ea10;
}
.tools .rx {
    font: bold 22px/24px "Liberation Serif", serif;
    color: #1c2878;
}
.rx small {
    font-size: 16px;
    vertical-align: sub;
}
.blank-bars {
    display: grid;
    grid-template-columns: 299px 1fr;
    height: 42px;
    padding: 1px 0 1px 6px;
    background: #f6f6f6;
}
.blank-bars i {
    border-left: 3px dotted #b4b4b4;
}
.blank-bars i + i {
    margin-left: -8px;
    border-left: 2px solid #b4b7ba;
    background: radial-gradient(#b0b0b0 1px, transparent 2px) 3px 0 / 7px 6px repeat-y;
}
.work {
    display: flex;
}
.side-tools {
    width: 31px;
}
.side-tools button {
    width: 31px;
    height: 31px;
}
.side-tools i {
    display: block;
    height: 12px;
    margin: 0 2px;
    background: linear-gradient(#aaa, #aaa) center / 100% 2px no-repeat;
}
.view {
    flex: 1;
    min-width: 0;
    border: solid #737877;
    border-width: 5px 2px 2px 5px;
}
.canvas-row {
    display: flex;
}
.canvas {
    flex: 1;
    min-width: 0;
    width: auto;
    height: auto;
    background: #fff;
}
.guide {
    stroke: #e0e0f6;
    stroke-width: 2;
}
.scale {
    font: italic 18px "Liberation Sans", sans-serif;
    fill: #aaa;
}
.axis {
    stroke: #3ecb48;
    stroke-width: 2;
    stroke-dasharray: 5 3;
}
.mesh {
    stroke: #111;
    stroke-width: 1.5;
    fill: none;
}
.axis-name {
    font: 18px "Liberation Sans", sans-serif;
    fill: #000;
}
.vscroll {
    display: flex;
    flex-direction: column;
    width: 33px;
    padding: 0 1px;
    background: #fcfcfc;
    border-left: 1px solid #ddd;
}
.vscroll button,
.hscroll button {
    display: flex;
    align-items: center;
    justify-content: center;
    width: 29px;
    height: 29px;
    background: #eee;
}
.vscroll .thumb {
    height: 158px;
    margin: auto 0;
}
.thumb {
    background: #cacacb;
}
.down { transform: rotate(180deg); }
.left { transform: rotate(-90deg); }
.right { transform: rotate(90deg); }
.hscroll {
    display: flex;
    justify-content: space-between;
    height: 31px;
    padding: 1px 0;
    margin-right: 33px;
    background: #fff;
}
.hscroll .thumb {
    width: 361px;
}
.filter-bar {
    display: flex;
    align-items: center;
    height: 34px;
    background: #eee;
    font: 19px/24px "Liberation Sans", sans-serif;
}
.filter-bar .tools {
    width: 731px;
}
.filter-bar .tools button {
    flex: 1;
}
.filter-name {
    flex: 1;
    padding: 4px 0 0 14px;
    text-align: center;
}
.status {
    display: flex;
    align-items: center;
    height: 43px;
    padding: 0 23px 4px 7px;
    font: 19px/24px "Liberation Sans", sans-serif;
}
.ready {
    flex: 1;
    padding-left: 25px;
}
.coords {
    display: grid;
    grid-template-columns: 22px 76px 29px 68px 39px 60px 1fr;
    width: 351px;
    height: 34px;
    padding: 3px 0 0 13px;
    border: 1px solid #fff;
    border-left: 3px solid #888;
    border-top: 3px solid #888;
}
.ok {
    width: 22px;
    height: 20px;
    margin: 0 14px 8px 5px;
}

/* callout from the button to the window */
.pointer-arrow {
    position: absolute;
    left: 809px;
    top: 731px;
    width: 292px;
    height: 42px;
    overflow: visible;
}
```
